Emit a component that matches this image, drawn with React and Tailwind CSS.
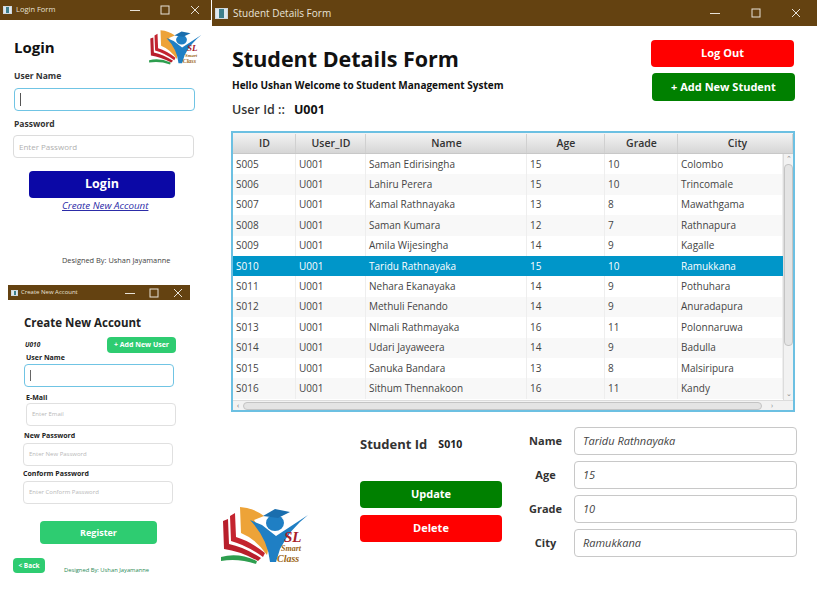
import React from "react";

const students = [
  ["S005", "U001", "Saman Edirisingha", "15", "10", "Colombo"],
  ["S006", "U001", "Lahiru Perera", "15", "10", "Trincomale"],
  ["S007", "U001", "Kamal Rathnayaka", "13", "8", "Mawathgama"],
  ["S008", "U001", "Saman Kumara", "12", "7", "Rathnapura"],
  ["S009", "U001", "Amila Wijesingha", "14", "9", "Kagalle"],
  ["S010", "U001", "Taridu Rathnayaka", "15", "10", "Ramukkana"],
  ["S011", "U001", "Nehara Ekanayaka", "14", "9", "Pothuhara"],
  ["S012", "U001", "Methuli Fenando", "14", "9", "Anuradapura"],
  ["S013", "U001", "NImali Rathmayaka", "16", "11", "Polonnaruwa"],
  ["S014", "U001", "Udari Jayaweera", "14", "9", "Badulla"],
  ["S015", "U001", "Sanuka Bandara", "13", "8", "Malsiripura"],
  ["S016", "U001", "Sithum Thennakoon", "16", "11", "Kandy"],
];

const columns = ["ID", "User_ID", "Name", "Age", "Grade", "City"];
const gridCols = "grid grid-cols-[63px_70px_161px_78px_73px_1fr]";

// books, graduate and tick of the SL Smart Class logo
const Logo = ({ className }) => (
  <svg viewBox="0 0 90 60" className={className}>
    <path d="M1 52 Q18 47 37 56 L36 59 Q18 53 1 56 Z" fill="#2e9e4f" />
    <path d="M3 16 L4 44 Q20 46 38 56 L41 53 Q24 42 9 39 L8 14 Z" fill="#b81f2c" />
    <path d="M10 11 L11 36 Q26 40 43 52 L45 48 Q30 36 16 32 L15 8 Z" fill="#c4242f" />
    <path d="M20 2 L21 28 Q36 34 47 50 Q50 40 44 30 L34 15 L44 11 Q34 3 20 2 Z" fill="#eda338" />
    <path d="M30 15 L42 20 L56 31 L88 10 Q70 24 60 44 L56 57 L50 57 Q48 34 30 15 Z" fill="#1f7fc4" />
    <ellipse cx="55" cy="18" rx="9" ry="8" fill="#1f7fc4" />
    <path d="M43 11 L55 4 L70 7 L58 13 Z" fill="#1a6eae" />
    <text x="64" y="37" fontFamily="Liberation Serif, serif" fontWeight="700" fontStyle="italic" fontSize="15" fill="#a82028">SL</text>
    <text x="61" y="46" fontFamily="Liberation Serif, serif" fontWeight="700" fontStyle="italic" fontSize="8" fill="#9a6414">Smart</text>
    <text x="57" y="57" fontFamily="Liberation Serif, serif" fontWeight="700" fontStyle="italic" fontSize="10" fill="#9a6414">Class</text>
  </svg>
);

const TitleBar = ({ title, height, text, icon, pad, gap, controls }) => (
  <div className={`flex items-center bg-[#644211] text-[#e8e2d8] ${height} ${pad}`}>
    <span className={`${icon} bg-[linear-gradient(90deg,#dfe8ee_0_30%,#3d7f8c_30%_70%,#dfe8ee_70%)] border border-[#cfd8de]`} />
    <span className={`${gap} ${text}`}>{title}</span>
    <div className={`ml-auto flex items-center ${controls}`}>
      <svg viewBox="0 0 10 10" className="w-[10px] h-[10px]"><path d="M0 5.5H10" stroke="#e8e2d8" /></svg>
      <svg viewBox="0 0 10 10" className="w-[10px] h-[10px]"><rect x="1" y="1" width="8" height="8" fill="none" stroke="#e8e2d8" /></svg>
      <svg viewBox="0 0 10 10" className="w-[10px] h-[10px]"><path d="M1 1L9 9M9 1L1 9" stroke="#e8e2d8" /></svg>
    </div>
  </div>
);

const Caret = () => <span className="block w-px h-[13px] bg-[#555]" />;

const LoginWindow = () => (
  <div className="absolute left-0 top-0 w-[211px] h-[268px] bg-white">
    <TitleBar title="Login Form" height="h-[20px]" text="text-[7.5px]" gap="ml-[4px]" icon="w-[9px] h-[8px]" pad="pl-[3px] pr-[11px]" controls="gap-[20px]" />
    <div className="relative pl-[14px] pt-[16px]">
      <h1 className="text-[15px] leading-[22px] font-bold text-[#111]">Login</h1>
      <Logo className="absolute left-[148px] top-[9px] w-[55px] h-[36px]" />
      <p className="mt-[12px] text-[8.5px] leading-[12px] font-bold text-[#333]">User Name</p>
      <div className="mt-[6px] w-[181px] h-[23px] flex items-center pl-[5px] rounded-sm border border-[#70c4e4] bg-white"><Caret /></div>
      <p className="mt-[7px] text-[8.5px] leading-[12px] font-bold text-[#333]">Password</p>
      <div className="mt-[5px] -ml-px w-[181px] h-[23px] flex items-center pl-[5px] rounded-sm border border-[#dcdcdc] text-[8px] text-[#b0b0b0]">Enter Password</div>
      <button className="block mt-[13px] ml-[15px] w-[146px] h-[27px] rounded-sm bg-[#0b08a6] text-white text-[12.5px] font-bold">Login</button>
      <a className="block mt-[1px] ml-[48px] text-[9.8px] leading-[13px] italic underline text-[#2c2ca8]">Create New Account</a>
      <p className="mt-[43px] ml-[48px] text-[7.4px] leading-[10px] text-[#444]">Designed By: Ushan Jayamanne</p>
    </div>
  </div>
);

const AccountField = ({ label, placeholder, focused, labelClass, boxClass }) => (
  <div>
    <p className={`text-[7px] leading-[9px] font-bold text-[#222] ${labelClass}`}>{label}</p>
    <div className={`w-[150px] h-[23px] flex items-center pl-[5px] rounded-sm border text-[6px] text-[#b8b8b8] ${focused ? "border-[#70c4e4]" : "border-[#e0e0e0]"} ${boxClass}`}>
      {focused ? <span className="block w-px h-[11px] bg-[#666]" /> : placeholder}
    </div>
  </div>
);

const AccountWindow = () => (
  <div className="absolute left-[8px] top-[285px] w-[182px] h-[295px]">
    <TitleBar title="Create New Account" height="h-[15px]" text="text-[6px]" gap="ml-[3px]" icon="w-[7px] h-[6px]" pad="pl-[3px] pr-[7px]" controls="gap-[14px]" />
    <div className="relative pl-[16px] pt-[15px]">
      <h2 className="text-[11.5px] leading-[15px] font-bold text-[#222]">Create New Account</h2>
      <div className="flex mt-[7px] ml-px w-[152px] justify-between">
        <span className="mt-[3px] text-[6.5px] leading-[9px] italic font-bold text-[#222]">U010</span>
        <button className="w-[69px] h-[16px] mr-[1px] rounded-sm bg-[#2ecc71] text-white text-[7px] font-bold">+ Add New User</button>
      </div>
      <div className="flex flex-col">
        <AccountField label="User Name" focused labelClass="ml-[2px] mb-[2px]" boxClass="" />
        <div className="mt-[6px]"><AccountField label="E-Mail" placeholder="Enter Email" labelClass="ml-[2px] mb-[1px]" boxClass="ml-[2px]" /></div>
        <div className="mt-[5px]"><AccountField label="New Password" placeholder="Enter New Password" labelClass="mb-[3px]" boxClass="-ml-px" /></div>
        <div className="mt-[3px]"><AccountField label="Conform Password" placeholder="Enter Conform Password" labelClass="-ml-px mb-[3px]" boxClass="-ml-px" /></div>
      </div>
      <button className="block mt-[17px] ml-[16px] w-[117px] h-[23px] rounded-sm bg-[#2ecc71] text-white text-[9px] font-bold">Register</button>
      <div className="flex mt-[14px] -ml-[11px] items-end">
        <button className="w-[32px] h-[15px] rounded-sm bg-[#2ecc71] text-white text-[6.5px] font-bold">&lt; Back</button>
        <span className="ml-[19px] text-[5.8px] leading-[8px] -mb-px text-[#2a8a55]">Designed By: Ushan Jayamanne</span>
      </div>
    </div>
  </div>
);

const StudentTable = () => (
  <div className="mt-[12px] w-[564px] h-[281px] border-2 border-[#6cc0e2] bg-white text-[10px] text-[#444]">
    <div className={`${gridCols} h-[21px] pt-px bg-[linear-gradient(#f4f4f4,#d6d6d6)] border-b border-[#c8c8c8] text-[10.5px] font-semibold text-[#333]`}>
      {columns.map((c) => (
        <div key={c} className={`flex items-center justify-center border-r border-[#d0d0d0] ${c === "City" ? "pl-[5px]" : "pl-px"}`}>{c}</div>
      ))}
    </div>
    <div className="flex">
      <div className="w-[550px] h-[246px] overflow-hidden">
        {students.map((s, i) => (
          <div key={s[0]} className={`${gridCols} h-[20.4px] ${s[0] === "S010" ? "bg-[#0096c9] text-white" : i % 2 ? "bg-[#f8f8f8]" : "bg-white"}`}>
            {s.map((v, j) => (
              <div key={j} className={`flex items-center pl-[3px] ${s[0] === "S010" ? "" : "border-r border-[#eeeeee]"}`}>{v}</div>
            ))}
          </div>
        ))}
      </div>
      <div className="flex-1 flex flex-col items-center bg-[#f2f2f2] border-l border-[#dcdcdc]">
        <span className="h-[10px] text-[7px] leading-[10px] text-[#888]">⌃</span>
        <span className="w-[9px] h-[182px] rounded-sm bg-[#e4e4e4] border border-[#c4c4c4]" />
        <span className="mt-auto h-[10px] text-[7px] leading-[8px] text-[#888]">⌄</span>
      </div>
    </div>
    <div className="flex items-center h-[10px] bg-[#f2f2f2] border-t border-[#dcdcdc]">
      <span className="w-[10px] text-center text-[7px] leading-[8px] text-[#666]">‹</span>
      <span className="w-[519px] h-[8px] rounded-sm bg-[#e4e4e4] border border-[#c4c4c4]" />
      <span className="ml-[9px] text-[7px] leading-[8px] text-[#888]">›</span>
    </div>
  </div>
);

const DetailRow = ({ label, value }) => (
  <div className="flex items-center h-[28px]">
    <span className="w-[43px] text-center text-[11px] font-bold text-[#333]">{label}</span>
    <div className="ml-[7px] w-[223px] h-full flex items-center pl-[8px] rounded-sm border border-[#c8c8c8] text-[11px] italic text-[#444]">{value}</div>
  </div>
);

const MainWindow = () => (
  <div className="absolute left-[212px] top-0 w-[605px] h-[572px] bg-white">
    <TitleBar title="Student Details Form" height="h-[26px]" text="text-[10px]" gap="ml-[5px]" icon="w-[13px] h-[11px]" pad="pl-[3px] pr-[16px]" controls="gap-[30.5px]" />
    <div className="pl-[20px]">
      <div className="flex">
        <div className="w-[419px] pt-[18px]">
          <h1 className="text-[21.5px] leading-[30px] font-bold text-[#111]">Student Details Form</h1>
          <p className="mt-[4px] text-[10px] leading-[14px] font-bold text-[#111]">Hello Ushan Welcome to Student Management System</p>
          <p className="mt-[9px] flex text-[12.5px] leading-[18px] font-semibold text-[#333]">User Id ::<span className="ml-[9px] font-bold text-[#111]">U001</span></p>
        </div>
        <div className="pt-[14px]">
          <button className="block w-[143px] h-[27px] rounded-sm bg-[#ff0000] text-white text-[11px] font-bold">Log Out</button>
          <button className="block mt-[6px] ml-px w-[143px] h-[28px] rounded-sm bg-[#008000] text-white text-[11px] font-bold">+ Add New Student</button>
        </div>
      </div>
      <div className="-ml-px"><StudentTable /></div>
      <div className="flex relative">
        <Logo className="absolute -left-[12px] top-[93px] w-[90px] h-[60px]" />
        <div className="ml-[128px] w-[142px] pt-[23px]">
          <p className="flex items-center h-[20px] text-[13px] font-bold text-[#333]">Student Id<span className="ml-[11px] text-[10.5px] text-[#222]">S010</span></p>
          <button className="block mt-[26px] w-[142px] h-[27px] rounded-sm bg-[#008000] text-white text-[11px] font-bold">Update</button>
          <button className="block mt-[7px] w-[142px] h-[27px] rounded-sm bg-[#ff0000] text-white text-[11px] font-bold">Delete</button>
        </div>
        <div className="ml-[22px] pt-[15px] flex flex-col gap-[6px]">
          <DetailRow label="Name" value="Taridu Rathnayaka" />
          <DetailRow label="Age" value="15" />
          <DetailRow label="Grade" value="10" />
          <DetailRow label="City" value="Ramukkana" />
        </div>
      </div>
    </div>
  </div>
);

export default function App() {
  return (
    <div className="relative w-[817px] h-[591px] bg-white overflow-hidden font-['Open_Sans',sans-serif]">
      <LoginWindow />
      <AccountWindow />
      <MainWindow />
    </div>
  );
}
